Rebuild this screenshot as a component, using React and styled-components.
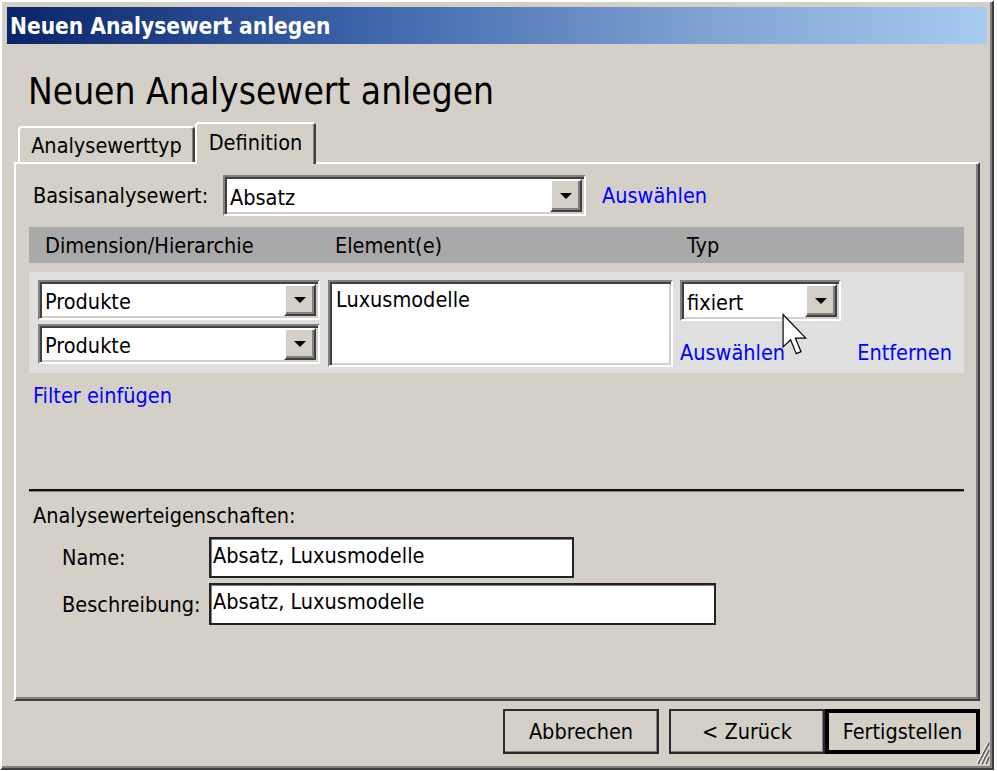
import React from 'react';
import styled, { createGlobalStyle } from 'styled-components';

const GlobalStyle = createGlobalStyle`
  html, body {
    margin: 0;
    padding: 0;
    background: #ffffff;
  }
  body {
    font-family: "DejaVu Sans Condensed", "DejaVu Sans", sans-serif;
    font-stretch: condensed;
    font-size: 21.5px;
    color: #000;
  }
`;

const FACE = '#d4d0c8';

// Window frame
const Window = styled.div`
  position: relative;
  box-sizing: border-box;
  width: 994px;
  height: 770px;
  padding: 5px;
  background: ${FACE};
  border: 2px solid;
  border-color: #ffffff #404040 #404040 #ffffff;
  box-shadow: inset -2px -2px 0 #808080;
  display: flex;
  flex-direction: column;
`;

const TitleBar = styled.div`
  height: 37px;
  flex-shrink: 0;
  display: flex;
  align-items: center;
  padding-left: 3px;
  background: linear-gradient(to right, #0a246a 0%, #3a62a8 35%, #7ea1d2 70%, #a6caf0 100%);
  color: #ffffff;
  font-weight: bold;
  font-size: 22.5px;
`;

const Content = styled.div`
  padding: 0 7px 0 7px;
  display: flex;
  flex-direction: column;
`;

const Heading = styled.h1`
  margin: 26px 0 0 14px;
  font-size: 36.8px;
  line-height: 44px;
  font-weight: normal;
`;

// Tabs
const TabStrip = styled.div`
  position: relative;
  z-index: 1;
  display: flex;
  align-items: flex-end;
  height: 40px;
  margin-top: 8px;
  padding-left: 4px;
`;

const Tab = styled.div`
  box-sizing: border-box;
  width: ${p => p.$w}px;
  height: ${p => (p.$active ? 42 : 36)}px;
  margin-bottom: ${p => (p.$active ? -2 : 0)}px;
  padding-bottom: ${p => (p.$active ? 4 : 0)}px;
  display: flex;
  align-items: center;
  justify-content: center;
  background: ${FACE};
  border: 2px solid;
  border-bottom: none;
  border-color: #ffffff #404040 transparent #ffffff;
  border-radius: 4px 4px 0 0;
  box-shadow: inset -1px 0 0 #808080;
`;

const Panel = styled.div`
  box-sizing: border-box;
  height: 539px;
  padding: 11px 14px 0 13px;
  border: 2px solid;
  border-color: #ffffff #404040 #404040 #ffffff;
  box-shadow: inset -2px -2px 0 #808080;
  display: flex;
  flex-direction: column;
`;

// Basis row
const BaseRow = styled.div`
  display: flex;
  align-items: center;
  height: 41px;
`;

const Label = styled.div`
  box-sizing: border-box;
  width: ${p => p.$w}px;
  padding-left: ${p => p.$indent || 4}px;
  flex-shrink: 0;
`;

const Link = styled.span`
  color: #0000ff;
  margin-left: ${p => p.$ml || 0}px;
  line-height: 26px;
`;

// Sunken combo / text fields
const Field = styled.div`
  box-sizing: border-box;
  width: ${p => p.$w}px;
  height: ${p => p.$h}px;
  display: flex;
  align-items: ${p => (p.$multi ? 'flex-start' : 'center')};
  background: #ffffff;
  border: 2px solid;
  border-color: #808080 #ffffff #ffffff #808080;
  box-shadow: inset 2px 2px 0 #404040, inset -2px -2px 0 ${FACE};
  padding: ${p => (p.$multi ? '5px 2px 2px 6px' : '2px 2px 2px 5px')};
`;

const FieldText = styled.span`
  flex: 1;
  white-space: nowrap;
  padding-top: ${p => (p.$multi ? 0 : 3)}px;
`;

const DropButton = styled.div`
  box-sizing: border-box;
  width: 32px;
  align-self: stretch;
  display: flex;
  align-items: center;
  justify-content: center;
  background: ${FACE};
  border: 2px solid;
  border-color: #ffffff #404040 #404040 #ffffff;
  box-shadow: inset -2px -2px 0 #808080;

  &::after {
    content: '';
    border-left: 6px solid transparent;
    border-right: 6px solid transparent;
    border-top: 6px solid #000;
  }
`;

const Combo = ({ w, h, children }) => (
  <Field $w={w} $h={h}>
    <FieldText>{children}</FieldText>
    <DropButton />
  </Field>
);

// Dimension grid
const HeaderBand = styled.div`
  margin-top: 11px;
  height: 36px;
  box-sizing: border-box;
  padding-left: 9px;
  background: #a9a9a9;
  display: grid;
  grid-template-columns: 290px 352px 1fr;
  align-items: center;
`;

const HeaderCell = styled.div`
  padding-left: 7px;
`;

const RowBand = styled.div`
  margin-top: 9px;
  height: 101px;
  box-sizing: border-box;
  padding: 8px 0 0 9px;
  background: #dfdfdf;
  display: grid;
  grid-template-columns: 290px 352px 1fr;
  align-items: start;
`;

const Stack = styled.div`
  display: flex;
  flex-direction: column;
  gap: 4px;
`;

const TypCell = styled.div`
  position: relative;
  display: flex;
  flex-direction: column;
`;

const LinkRow = styled.div`
  display: flex;
  justify-content: space-between;
  margin-top: 19px;
  padding-right: 12px;
`;

const Cursor = styled.svg`
  position: absolute;
  left: 102px;
  top: 33px;
`;

const FilterLink = styled.div`
  margin-top: 10px;
  padding-left: 4px;
  color: #0000ff;
  line-height: 26px;
`;

const Separator = styled.div`
  margin-top: 80px;
  height: 2px;
  background: #111;
  box-shadow: 0 1px 0 #808080;
`;

const SectionLabel = styled.div`
  margin-top: 12px;
  padding-left: 4px;
  line-height: 26px;
`;

const PropRow = styled.div`
  display: flex;
  align-items: center;
  margin-top: ${p => p.$mt}px;
`;

const FlatInput = styled.div`
  box-sizing: border-box;
  width: ${p => p.$w}px;
  height: ${p => p.$h}px;
  padding: 2px 0 0 2px;
  background: #ffffff;
  border: 2px solid #222;
  box-shadow: inset 1px 1px 0 #808080;
  white-space: nowrap;
  line-height: 30px;
`;

// Buttons
const ButtonRow = styled.div`
  display: flex;
  justify-content: flex-end;
  margin-top: 8px;
`;

const Button = styled.div`
  box-sizing: border-box;
  width: ${p => p.$w}px;
  height: 45px;
  margin-right: ${p => p.$mr || 0}px;
  display: flex;
  align-items: center;
  justify-content: center;
  background: ${FACE};
  border: ${p => (p.$default ? '4px solid #000' : '2px solid #2a2a2a')};
  box-shadow: ${p => (p.$default ? 'none' : 'inset -1px -1px 0 #808080')};
`;

const Grip = styled.svg`
  position: absolute;
  right: 2px;
  bottom: 3px;
  z-index: 2;
`;

export default function App() {
  return (
    <>
      <GlobalStyle />
      <Window>
        <TitleBar>Neuen Analysewert anlegen</TitleBar>
        <Content>
          <Heading>Neuen Analysewert anlegen</Heading>
          <TabStrip>
            <Tab $w={177}>Analysewerttyp</Tab>
            <Tab $w={121} $active>Definition</Tab>
          </TabStrip>
          <Panel>
            <BaseRow>
              <Label $w={194}>Basisanalysewert:</Label>
              <Combo w={363} h={41}>Absatz</Combo>
              <Link $ml={16}>Auswählen</Link>
            </BaseRow>

            <HeaderBand>
              <HeaderCell>Dimension/Hierarchie</HeaderCell>
              <HeaderCell>Element(e)</HeaderCell>
              <HeaderCell>Typ</HeaderCell>
            </HeaderBand>

            <RowBand>
              <Stack>
                <Combo w={282} h={40}>Produkte</Combo>
                <Combo w={282} h={40}>Produkte</Combo>
              </Stack>
              <Field $w={345} $h={87} $multi>
                <FieldText $multi>Luxusmodelle</FieldText>
              </Field>
              <TypCell>
                <Combo w={161} h={41}>fixiert</Combo>
                <LinkRow>
                  <Link>Auswählen</Link>
                  <Link>Entfernen</Link>
                </LinkRow>
                <Cursor width="27" height="43" viewBox="0 0 12.5 19.5">
                  <path
                    d="M0.5 0.5 L0.5 15.5 L4 12.2 L6.6 18.6 L8.8 17.7 L6.2 11.4 L11 11.4 Z"
                    fill="#ffffff"
                    stroke="#000000"
                    strokeWidth="0.55"
                    strokeLinejoin="miter"
                  />
                </Cursor>
              </TypCell>
            </RowBand>

            <FilterLink>Filter einfügen</FilterLink>

            <Separator />

            <SectionLabel>Analysewerteigenschaften:</SectionLabel>
            <PropRow $mt={8}>
              <Label $w={180} $indent={33}>Name:</Label>
              <FlatInput $w={365} $h={41}>Absatz, Luxusmodelle</FlatInput>
            </PropRow>
            <PropRow $mt={5}>
              <Label $w={180} $indent={33}>Beschreibung:</Label>
              <FlatInput $w={507} $h={42}>Absatz, Luxusmodelle</FlatInput>
            </PropRow>
          </Panel>

          <ButtonRow>
            <Button $w={156} $mr={10}>Abbrechen</Button>
            <Button $w={156}>&lt; Zurück</Button>
            <Button $w={155} $default>Fertigstellen</Button>
          </ButtonRow>
        </Content>
        <Grip width="14" height="24" viewBox="0 0 14 24">
          <g stroke="#606060" strokeWidth="1.8">
            <line x1="13" y1="2" x2="2" y2="23" />
            <line x1="13" y1="9" x2="6" y2="23" />
            <line x1="13" y1="16" x2="10" y2="23" />
          </g>
          <g stroke="#ffffff" strokeWidth="1">
            <line x1="11.5" y1="2" x2="0.5" y2="23" />
            <line x1="11.5" y1="9" x2="4.5" y2="23" />
            <line x1="11.5" y1="16" x2="8.5" y2="23" />
          </g>
        </Grip>
      </Window>
    </>
  );
}
